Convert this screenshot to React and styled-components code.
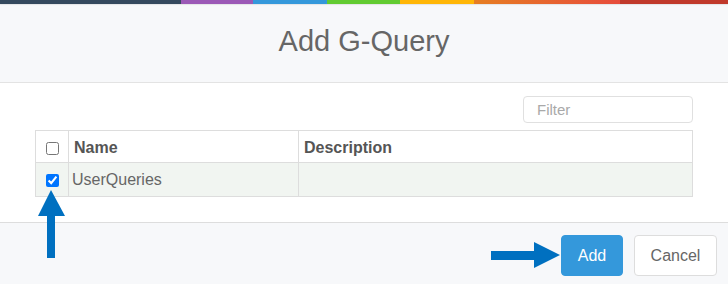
import React from "react";
import styled, { createGlobalStyle } from "styled-components";

const Global = createGlobalStyle`
  html, body { margin: 0; padding: 0; background: #ffffff; }
  body { font-family: "Liberation Sans", Arial, sans-serif; }
  * { box-sizing: border-box; }
`;

const Modal = styled.div`
  position: relative;
  width: 728px;
  height: 284px;
  display: flex;
  flex-direction: column;
  overflow: hidden;
`;

const TopBar = styled.div`
  display: flex;
  height: 4px;
  flex: 0 0 4px;
  box-shadow: 0 1px 1px rgba(0, 0, 0, 0.08);
  position: relative;
  z-index: 1;
`;

const Segment = styled.div`
  width: ${(p) => p.$w}px;
  flex: 0 0 ${(p) => p.$w}px;
  background: ${(p) => p.$bg};
`;

const Header = styled.div`
  height: 79px;
  flex: 0 0 79px;
  background: #f7f8fa;
  border-bottom: 1px solid #e3e3e3;
  display: flex;
  align-items: center;
  justify-content: center;
`;

const Title = styled.h2`
  margin: 0;
  font-size: 29px;
  font-weight: 400;
  color: #666666;
  padding-bottom: 4px;
`;

const Body = styled.div`
  flex: 0 0 139px;
  background: #ffffff;
  padding: 13px 35px 0 35px;
  display: flex;
  flex-direction: column;
`;

const FilterRow = styled.div`
  display: flex;
  justify-content: flex-end;
`;

const FilterInput = styled.input`
  width: 170px;
  height: 27px;
  border: 1px solid #e0e0e0;
  border-radius: 4px;
  padding: 0 13px;
  font-family: "Liberation Sans", Arial, sans-serif;
  font-size: 15px;
  color: #555;
  outline: none;
  &::placeholder { color: #a9a9a9; }
`;

const Table = styled.table`
  margin-top: 7px;
  width: 658px;
  border-collapse: collapse;
  border: 1px solid #dddddd;
  table-layout: fixed;
`;

const HeadCell = styled.th`
  height: 32px;
  border: 1px solid #dddddd;
  text-align: ${(p) => (p.$check ? "center" : "left")};
  padding: ${(p) => (p.$check ? "0" : "0 5px")};
  font-size: 16px;
  font-weight: 700;
  color: #555555;
  vertical-align: middle;
  padding-top: 2px;
`;

const Row = styled.tr`
  background: #f1f5f1;
`;

const Cell = styled.td`
  height: 34px;
  border: 1px solid #dddddd;
  text-align: ${(p) => (p.$check ? "center" : "left")};
  padding: ${(p) => (p.$check ? "0" : "0 3px")};
  font-size: 16px;
  color: #666666;
  vertical-align: middle;
`;

const Check = styled.input`
  width: 13px;
  height: 13px;
  margin: 0;
  vertical-align: middle;
`;

const Footer = styled.div`
  flex: 1 1 auto;
  background: #f7f8fa;
  border-top: 1px solid #dddddd;
  display: flex;
  justify-content: flex-end;
  align-items: flex-start;
  gap: 11px;
  padding: 12px 11px 0 0;
`;

const Button = styled.button`
  height: 41px;
  padding: 0 ${(p) => (p.$primary ? "15px" : "15px")};
  min-width: ${(p) => (p.$primary ? "62px" : "83px")};
  border-radius: 4px;
  border: 1px solid ${(p) => (p.$primary ? "#3498db" : "#dddddd")};
  background: ${(p) => (p.$primary ? "#3498db" : "#ffffff")};
  color: ${(p) => (p.$primary ? "#ffffff" : "#666666")};
  font-family: "Liberation Sans", Arial, sans-serif;
  font-size: 16px;
  cursor: pointer;
`;

const ArrowSvg = styled.svg`
  position: absolute;
  left: 0;
  top: 0;
  pointer-events: none;
`;

const segments = [
  [181, "#34495e"],
  [72, "#9b59b6"],
  [74, "#3498db"],
  [73, "#62cb31"],
  [74, "#ffb606"],
  [146, "linear-gradient(90deg, #e67e22, #e74c3c)"],
  [108, "#c0392b"],
];

export default function App() {
  return (
    <>
      <Global />
      <Modal>
        <TopBar>
          {segments.map(([w, bg], i) => (
            <Segment key={i} $w={w} $bg={bg} />
          ))}
        </TopBar>
        <Header>
          <Title>Add G-Query</Title>
        </Header>
        <Body>
          <FilterRow>
            <FilterInput placeholder="Filter" />
          </FilterRow>
          <Table>
            <colgroup>
              <col style={{ width: 33 }} />
              <col style={{ width: 230 }} />
              <col />
            </colgroup>
            <thead>
              <tr>
                <HeadCell $check>
                  <Check type="checkbox" readOnly />
                </HeadCell>
                <HeadCell>Name</HeadCell>
                <HeadCell>Description</HeadCell>
              </tr>
            </thead>
            <tbody>
              <Row>
                <Cell $check>
                  <Check type="checkbox" defaultChecked />
                </Cell>
                <Cell>UserQueries</Cell>
                <Cell />
              </Row>
            </tbody>
          </Table>
        </Body>
        <Footer>
          <Button $primary>Add</Button>
          <Button>Cancel</Button>
        </Footer>
        <ArrowSvg width="728" height="284" viewBox="0 0 728 284">
          <polygon
            points="51,190 65,216 55,216 55,258 47,258 47,216 38,216"
            fill="#0070c0"
          />
          <polygon
            points="491,251 534,251 534,242 560,255 534,268 534,260 491,260"
            fill="#0070c0"
          />
        </ArrowSvg>
      </Modal>
    </>
  );
}
